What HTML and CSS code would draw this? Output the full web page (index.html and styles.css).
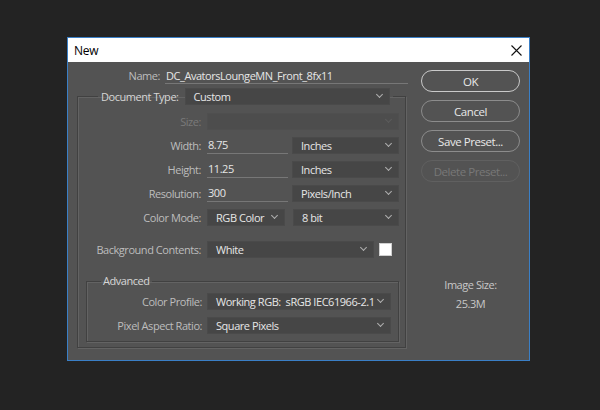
FILE: index.html
```html
<!DOCTYPE html>
<html>
<head>
<meta charset="utf-8">
<link rel="stylesheet" href="styles.css">
</head>
<body>
<div class="dialog">
  <div class="titlebar">
    <span class="title">New</span>
    <svg class="close" width="11" height="11" viewBox="0 0 11 11"><path d="M0.5 0.5 L10.5 10.5 M10.5 0.5 L0.5 10.5" stroke="#111" stroke-width="1.1" fill="none"/></svg>
  </div>
  <div class="body">
    <div class="left">
      <div class="name-row">
        <span class="lbl name-lbl">Name:</span>
        <div class="input name-input">DC_AvatorsLoungeMN_Front_8fx11</div>
      </div>
      <fieldset class="group doc">
        <legend class="doc-legend"><span class="lbl strong">Document Type:</span><div class="select doc-select">Custom</div></legend>
        <div class="row first">
          <span class="lbl w-main disabled">Size:</span>
          <div class="select is-disabled full"></div>
        </div>
        <div class="row">
          <span class="lbl w-main">Width:</span>
          <div class="input num">8.75</div>
          <div class="select unit">Inches</div>
        </div>
        <div class="row">
          <span class="lbl w-main">Height:</span>
          <div class="input num">11.25</div>
          <div class="select unit">Inches</div>
        </div>
        <div class="row">
          <span class="lbl w-main">Resolution:</span>
          <div class="input num">300</div>
          <div class="select unit">Pixels/Inch</div>
        </div>
        <div class="row">
          <span class="lbl w-main">Color Mode:</span>
          <div class="select mode">RGB Color</div>
          <div class="select bits">8 bit</div>
        </div>
        <div class="row bg-row">
          <span class="lbl w-main">Background Contents:</span>
          <div class="select bgsel">White</div>
          <div class="swatch"></div>
        </div>
        <fieldset class="group adv">
          <legend class="adv-legend">Advanced</legend>
          <div class="row adv-first">
            <span class="lbl w-adv">Color Profile:</span>
            <div class="select full">Working RGB:&nbsp; sRGB IEC61966-2.1</div>
          </div>
          <div class="row">
            <span class="lbl w-adv">Pixel Aspect Ratio:</span>
            <div class="select full">Square Pixels</div>
          </div>
        </fieldset>
      </fieldset>
    </div>
    <div class="right">
      <div class="btn default">OK</div>
      <div class="btn">Cancel</div>
      <div class="btn">Save Preset...</div>
      <div class="btn is-disabled">Delete Preset...</div>
      <div class="imgsize">
        <div>Image Size:</div>
        <div>25.3M</div>
      </div>
    </div>
  </div>
</div>
</body>
</html>
```

FILE: styles.css
```css
html, body {
  margin: 0;
  background: #232323;
}
body {
  padding: 37px 0 0 67px;
  font-family: "Open Sans", "Noto Sans", sans-serif;
  font-size: 11px;
  letter-spacing: -0.45px;
  color: #c4c4c4;
}
.dialog {
  width: 463px;
  height: 324px;
  box-sizing: border-box;
  border: 1px solid #3a7fc6;
  background: #535353;
  display: flex;
  flex-direction: column;
}
.titlebar {
  height: 24px;
  flex: none;
  background: #ffffff;
  display: flex;
  align-items: center;
  padding: 0 7px 0 6px;
  color: #000;
  font-size: 12px;
  letter-spacing: -0.3px;
}
.close {
  margin-left: auto;
}
.body {
  flex: 1;
  display: flex;
  padding: 6px 8px 0 5px;
  gap: 12px;
}
.left {
  width: 336px;
  flex: none;
  min-width: 0;
}
.lbl {
  color: #bdbdbd;
  white-space: nowrap;
}
.lbl.strong {
  color: #d6d6d6;
}
.lbl.disabled {
  color: #7a7a7a;
}
.name-row {
  display: flex;
  align-items: flex-end;
  height: 16px;
}
.name-lbl {
  width: 87px;
  text-align: right;
  margin-right: 5px;
  line-height: 16px;
}
.input {
  height: 16px;
  box-sizing: border-box;
  border-bottom: 1px solid #777;
  color: #e6e6e6;
  padding-left: 1px;
  line-height: 15px;
}
.name-input {
  flex: 1;
  margin-right: 1px;
}
.group {
  margin: 0;
  min-width: 0;
  border: 1px solid #414141;
  box-shadow: inset 1px 1px 0 #636363, 1px 1px 0 #636363;
}
.doc {
  margin: 4px 3px 0 4px;
  padding: 0 6px 5px 8px;
}
.doc-legend {
  display: flex;
  align-items: center;
  margin-left: 12px;
  padding: 0 3px;
  gap: 6px;
}
.select {
  display: flex;
  align-items: center;
  height: 17px;
  box-sizing: border-box;
  background: #464646;
  border: 1px solid #4a4a4a;
  padding: 0 7px 0 8px;
  color: #e6e6e6;
  white-space: nowrap;
  min-width: 0;
  overflow: hidden;
}
.select::after {
  content: "";
  margin-left: auto;
  width: 4px;
  height: 4px;
  border-right: 1px solid #b0b0b0;
  border-bottom: 1px solid #b0b0b0;
  transform: translateY(-2px) rotate(45deg);
  flex: none;
}
.select.is-disabled {
  background: #4d4d4d;
  border-color: #4f4f4f;
}
.select.is-disabled::after {
  border-color: #5c5c5c;
}
.doc-select {
  width: 205px;
}
.row {
  display: flex;
  align-items: center;
  height: 17px;
  margin-top: 7px;
}
.row.first {
  margin-top: 8px;
}
.w-main {
  width: 115px;
  text-align: right;
  margin-right: 6px;
  flex: none;
}
.full {
  flex: 1;
}
.num {
  width: 81px;
  height: 17px;
  margin-right: 4px;
  flex: none;
}
.unit {
  width: 107px;
  flex: none;
}
.mode {
  width: 78px;
  margin-right: 8px;
  flex: none;
}
.bits {
  width: 106px;
  flex: none;
}
.bg-row {
  margin-top: 15px;
}
.bgsel {
  width: 167px;
  margin-right: 5px;
  flex: none;
}
.swatch {
  width: 13px;
  height: 13px;
  box-sizing: border-box;
  background: #ffffff;
  border: 1px solid #cfcfcf;
  flex: none;
}
.adv {
  margin: 15px 0 0 0;
  padding: 0 7px 7px 14px;
}
.adv-legend {
  padding: 0 2px;
  color: #d6d6d6;
  line-height: 16px;
}
.row.adv-first {
  margin-top: 4px;
}
.w-adv {
  width: 101px;
  text-align: right;
  margin-right: 5px;
  flex: none;
}
.right {
  width: 99px;
  flex: none;
  display: flex;
  flex-direction: column;
  padding-top: 2px;
}
.btn {
  height: 22px;
  box-sizing: border-box;
  border: 1px solid #8c8c8c;
  border-radius: 11px;
  display: flex;
  align-items: center;
  justify-content: center;
  color: #e8e8e8;
  margin-bottom: 8px;
  font-size: 11.5px;
}
.btn.default {
  border: 1.5px solid #c9c9c9;
}
.btn.is-disabled {
  border-color: #606060;
  color: #787878;
}
.imgsize {
  margin-top: 85px;
  text-align: center;
  line-height: 19px;
  color: #c8c8c8;
}
```
